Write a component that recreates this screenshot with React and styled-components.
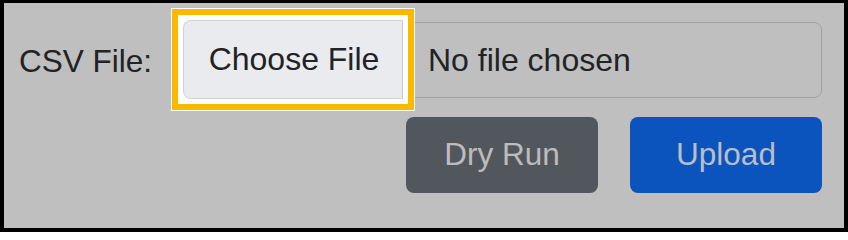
import React from 'react';
import styled, { createGlobalStyle } from 'styled-components';

const GlobalStyle = createGlobalStyle`
  html, body {
    margin: 0;
    padding: 0;
  }
  body {
    font-family: "Liberation Sans", Arial, sans-serif;
  }
`;

function App() {
  return (
    <>
      <GlobalStyle />
      <Panel>
        <FieldRow>
          <Label htmlFor="csv">CSV File:</Label>
          <FileField>
            <FocusRing>
              <ChooseButton id="csv" type="button">
                Choose File
              </ChooseButton>
            </FocusRing>
            <FileName>No file chosen</FileName>
          </FileField>
        </FieldRow>
        <Actions>
          <ActionButton $variant="secondary">Dry Run</ActionButton>
          <ActionButton $variant="primary">Upload</ActionButton>
        </Actions>
      </Panel>
    </>
  );
}

const Panel = styled.div`
  box-sizing: border-box;
  width: 848px;
  height: 232px;
  border: 4px solid #000;
  border-top-width: 3px;
  background-color: #bfbfbf;
  padding: 19px 22px 0 15px;
  display: flex;
  flex-direction: column;
`;

const FieldRow = styled.div`
  display: flex;
  align-items: center;
`;

const Label = styled.label`
  width: 163px;
  flex-shrink: 0;
  font-size: 31.5px;
  color: #212325;
  padding-top: 2px;
`;

const FileField = styled.div`
  flex: 1;
  box-sizing: border-box;
  height: 76px;
  display: flex;
  align-items: center;
  border: 1px solid #a0a2a6;
  border-radius: 8px;
`;

/* square focus ring: white gap, yellow band, thin white edge */
const FocusRing = styled.span`
  align-self: stretch;
  display: flex;
  margin: -14px -11px -13px -11px;
  padding: 5px;
  background-color: #fff;
  border: 6px solid #fbb800;
  outline: 1px solid #fff;
`;

const ChooseButton = styled.button`
  box-sizing: border-box;
  width: 220px;
  padding: 0 0 0 2px;
  font-family: inherit;
  font-size: 32px;
  color: #212325;
  background-color: #e9ebef;
  border: 1px solid #cfd3d9;
  border-right-color: #c5c9cf;
  border-radius: 8px 0 0 8px;
  cursor: pointer;
`;

const FileName = styled.span`
  margin-left: 25px;
  font-size: 32px;
  color: #212325;
`;

const Actions = styled.div`
  display: flex;
  justify-content: flex-end;
  gap: 32px;
  margin-top: 19px;
`;

const ActionButton = styled.button`
  width: 192px;
  height: 76px;
  border: none;
  border-radius: 8px;
  font-family: inherit;
  font-size: 31.5px;
  padding: 0 0 2px;
  background-color: ${(p) => (p.$variant === 'primary' ? '#0b54be' : '#52575d')};
  color: ${(p) => (p.$variant === 'primary' ? '#b9bec8' : '#bcbcbc')};
`;

export default App;
